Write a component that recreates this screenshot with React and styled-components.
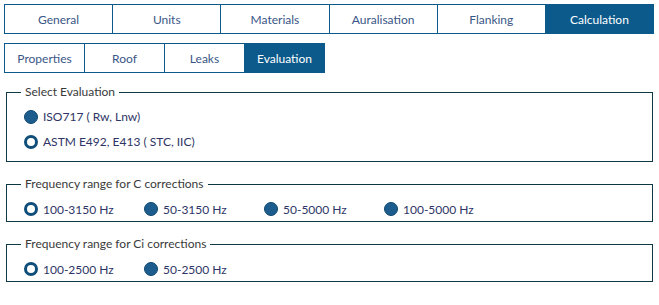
import React, { useState } from "react";
import styled, { createGlobalStyle } from "styled-components";

const Global = createGlobalStyle`
  html, body { margin: 0; padding: 0; background: #fff; }
  body { font-family: "Lato", "Liberation Sans", sans-serif; font-size: 12px; }
  * { box-sizing: border-box; }
`;

const Page = styled.div`
  padding: 4px;
  width: 659px;
`;

const TabBar = styled.div`
  display: flex;
  width: ${(p) => p.$width}px;
  height: 30px;
  margin-top: ${(p) => p.$top || 0}px;
`;

const Tab = styled.div`
  flex: ${(p) => (p.$fixed ? `0 0 ${p.$fixed}px` : "1 1 0")};
  display: flex;
  align-items: center;
  justify-content: center;
  border: 1px solid #0b5a8b;
  background: ${(p) => (p.$active ? "#0b5a8b" : "#fff")};
  color: ${(p) => (p.$active ? "#fff" : "#3a5686")};
  font-size: 12px;
  cursor: pointer;
  & + & { margin-left: -1px; }
`;

const Group = styled.fieldset`
  margin: ${(p) => p.$top}px 0 0 2px;
  width: 647px;
  border: 1px solid #0d3846;
  padding: ${(p) => p.$pt}px 10px ${(p) => p.$pb}px 17px;
`;

const Legend = styled.legend`
  margin-left: -3px;
  padding: 0 4px;
  line-height: 16px;
  font-size: 12px;
  color: #3a3a3a;
`;

const Options = styled.div`
  display: flex;
  flex-direction: ${(p) => (p.$column ? "column" : "row")};
`;

const Option = styled.label`
  display: flex;
  align-items: center;
  gap: 5px;
  height: ${(p) => p.$h}px;
  width: ${(p) => (p.$w ? `${p.$w}px` : "auto")};
  color: #2e3566;
  font-size: 12px;
  cursor: pointer;
`;

const Dot = styled.span`
  flex: 0 0 14px;
  width: 14px;
  height: 14px;
  border-radius: 50%;
  background: ${(p) => (p.$on ? "#1d5d8d" : "#fff")};
  border: ${(p) => (p.$on ? "1.5px solid #0f4770" : "3px solid #0e4e79")};
`;

function Radio({ on, label, h, w, onClick }) {
  return (
    <Option $h={h} $w={w} onClick={onClick}>
      <Dot $on={on} />
      <span>{label}</span>
    </Option>
  );
}

export default function App() {
  const [evalSel, setEvalSel] = useState(0);
  const top = ["General", "Units", "Materials", "Auralisation", "Flanking", "Calculation"];
  const sub = ["Properties", "Roof", "Leaks", "Evaluation"];
  const cOpts = [
    ["100-3150 Hz", false],
    ["50-3150 Hz", true],
    ["50-5000 Hz", true],
    ["100-5000 Hz", true],
  ];
  const ciOpts = [
    ["100-2500 Hz", false],
    ["50-2500 Hz", true],
  ];
  return (
    <Page>
      <Global />
      <TabBar $width={650}>
        {top.map((t) => (
          <Tab key={t} $active={t === "Calculation"}>{t}</Tab>
        ))}
      </TabBar>
      <TabBar $width={321} $top={9}>
        {sub.map((t) => (
          <Tab key={t} $fixed={81} $active={t === "Evaluation"}>{t}</Tab>
        ))}
      </TabBar>

      <Group $top={11} $pt={4} $pb={7}>
        <Legend>Select Evaluation</Legend>
        <Options $column>
          <Radio h={25} on={evalSel === 0} label="ISO717 ( Rw, Lnw)" onClick={() => setEvalSel(0)} />
          <Radio h={25} on={evalSel === 1} label="ASTM E492, E413 ( STC, IIC)" onClick={() => setEvalSel(1)} />
        </Options>
      </Group>

      <Group $top={14} $pt={5} $pb={0}>
        <Legend>Frequency range for C corrections</Legend>
        <Options>
          {cOpts.map(([l, on]) => (
            <Radio key={l} h={24} w={120} on={on} label={l} />
          ))}
        </Options>
      </Group>

      <Group $top={14} $pt={5} $pb={0}>
        <Legend>Frequency range for Ci corrections</Legend>
        <Options>
          {ciOpts.map(([l, on]) => (
            <Radio key={l} h={24} w={120} on={on} label={l} />
          ))}
        </Options>
      </Group>
    </Page>
  );
}
